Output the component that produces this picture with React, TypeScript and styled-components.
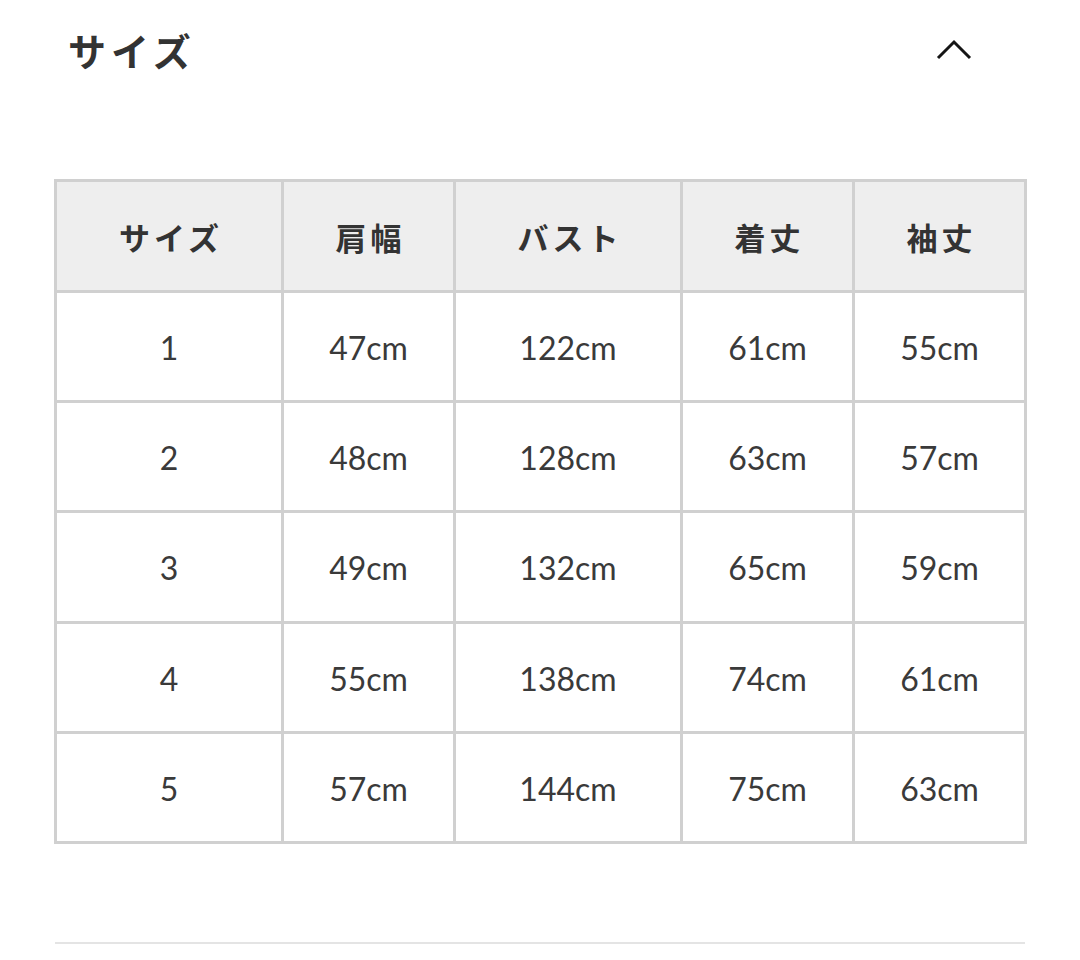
import React from "react";
import styled, { createGlobalStyle } from "styled-components";

const GlobalStyle = createGlobalStyle`
  html, body {
    margin: 0;
    padding: 0;
    background: #ffffff;
  }
  body {
    font-family: Lato, "Noto Sans CJK JP", sans-serif;
    color: #333333;
  }
`;

const Page = styled.div`
  width: 1080px;
  height: 960px;
  box-sizing: border-box;
  padding: 0 55px;
  display: flex;
  flex-direction: column;
`;

const Header = styled.div`
  height: 100px;
  display: flex;
  align-items: center;
  justify-content: space-between;
  padding: 0 52px 0 13px;
`;

const Title = styled.h2`
  margin: 0;
  font-family: "Noto Sans CJK JP", sans-serif;
  font-size: 38px;
  font-weight: 700;
  letter-spacing: 5px;
  color: #333333;
  line-height: 1;
`;

const Toggle = styled.button`
  border: 0;
  background: none;
  padding: 0;
  width: 38px;
  height: 24px;
  display: flex;
  align-items: center;
  justify-content: center;
  cursor: pointer;
`;

const Table = styled.table`
  margin-top: 79px;
  width: 973px;
  margin-left: -1px;
  border-collapse: collapse;
  table-layout: fixed;
`;

const Th = styled.th`
  height: 108px;
  background: #eeeeee;
  border: 3px solid #d0d0d0;
  font-family: "Noto Sans CJK JP", sans-serif;
  font-size: 31px;
  font-weight: 700;
  letter-spacing: 4px;
  color: #333333;
  text-align: center;
  padding: 0 0 0 4px;
`;

const Td = styled.td`
  height: 105.2px;
  border: 3px solid #d0d0d0;
  font-family: Lato, sans-serif;
  font-size: 32px;
  color: #3a3a3a;
  text-align: center;
  padding: 2px 0 0;
`;

const Divider = styled.div`
  margin-top: auto;
  margin-bottom: 16px;
  height: 2px;
  background: #e4e4e4;
`;

const widths = [227, 172, 227, 172, 172];
const heads = ["サイズ", "肩幅", "バスト", "着丈", "袖丈"];
const rows = [
  ["1", "47cm", "122cm", "61cm", "55cm"],
  ["2", "48cm", "128cm", "63cm", "57cm"],
  ["3", "49cm", "132cm", "65cm", "59cm"],
  ["4", "55cm", "138cm", "74cm", "61cm"],
  ["5", "57cm", "144cm", "75cm", "63cm"],
];

const App = () => (
  <Page>
    <GlobalStyle />
    <Header>
      <Title>サイズ</Title>
      <Toggle aria-label="閉じる">
        <svg width="38" height="24" viewBox="0 0 38 24">
          <polyline
            points="3,20 19,4 35,20"
            fill="none"
            stroke="#151515"
            strokeWidth="3"
          />
        </svg>
      </Toggle>
    </Header>
    <Table>
      <colgroup>
        {widths.map((w, i) => (
          <col key={i} style={{ width: w }} />
        ))}
      </colgroup>
      <thead>
        <tr>
          {heads.map((h) => (
            <Th key={h}>{h}</Th>
          ))}
        </tr>
      </thead>
      <tbody>
        {rows.map((r) => (
          <tr key={r[0]}>
            {r.map((c, i) => (
              <Td key={i}>{c}</Td>
            ))}
          </tr>
        ))}
      </tbody>
    </Table>
    <Divider />
  </Page>
);

export default App;
